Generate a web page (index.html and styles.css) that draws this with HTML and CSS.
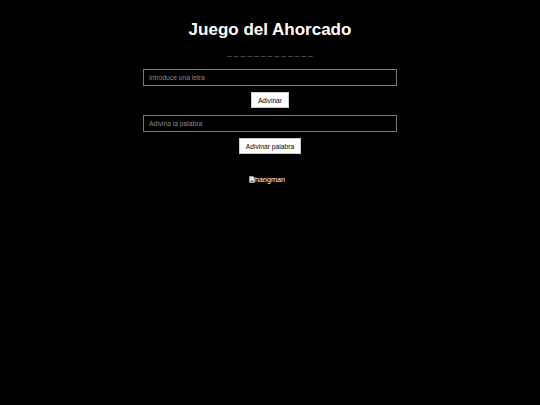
FILE: index.html
```html
<!DOCTYPE html>
<html lang="es">
<head>
<meta charset="utf-8">
<title>Juego del Ahorcado</title>
<link rel="stylesheet" href="styles.css">
</head>
<body>
<main class="game">
  <h1 class="title">Juego del Ahorcado</h1>
  <p class="word">_ _ _ _ _ _ _ _ _ _ _ _ _</p>
  <input class="field" type="text" placeholder="Introduce una letra">
  <button class="btn" type="button">Adivinar</button>
  <input class="field" type="text" placeholder="Adivina la palabra">
  <button class="btn" type="button">Adivinar palabra</button>
  <div class="picture">
    <svg class="broken" width="6" height="7" viewBox="0 0 6 7" aria-hidden="true">
      <path d="M0.5 0.5H4L5.5 2V6.5H0.5Z" fill="#e6e6e6" stroke="#a0a0a0" stroke-width="1"/>
      <path d="M1 6L2.6 3.6L3.6 5L4.6 4V6Z" fill="#5f9a50"/>
    </svg><span class="alt">hangman</span>
  </div>
</main>
</body>
</html>
```

FILE: styles.css
```css
html, body {
  margin: 0;
  padding: 0;
  background: #000;
  color: #fff;
  font-family: "Liberation Sans", Arial, sans-serif;
}

.game {
  width: 254px;
  margin: 0 auto;
  display: flex;
  flex-direction: column;
  align-items: center;
}

.title {
  margin: 20px 0 0;
  font-size: 17px;
  line-height: 20px;
  font-weight: bold;
}

.word {
  margin: 8px 0 0;
  font-size: 8.1px;
  line-height: 10px;
  color: #8c8c8c;
}

.field {
  box-sizing: border-box;
  width: 254px;
  height: 17px;
  margin: 11px 0 0;
  padding: 0 5px;
  background: #000;
  color: #fff;
  border: 1px solid #7a7a7a;
  border-radius: 0;
  font-family: inherit;
  font-size: 6.7px;
  outline: none;
}

.field::placeholder {
  color: #8a8a8a;
}

.field + .btn {
  margin-top: 6px;
}

.btn + .field {
  margin-top: 7px;
}

.btn {
  box-sizing: border-box;
  height: 16px;
  padding: 0 6px;
  background: #fff;
  color: #000;
  border: 1px solid #ccc;
  border-radius: 0;
  font-family: inherit;
  font-size: 6.7px;
}

.picture {
  margin: 21px 6px 0 0;
  display: flex;
  align-items: center;
  font-size: 7.2px;
  line-height: 9px;
  color: #fff;
}

.broken {
  display: block;
}
```
